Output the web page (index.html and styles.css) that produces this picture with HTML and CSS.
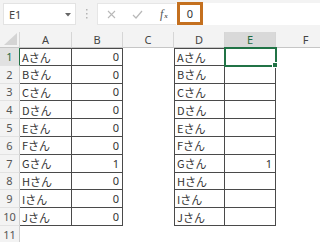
FILE: index.html
```html
<!DOCTYPE html>
<html lang="ja">
<head>
    <meta charset="UTF-8">
    <title>Sheet</title>
    <link rel="stylesheet" href="styles.css">
</head>
<body>
    <div class="bar">
        <div class="namebox">
            <span>E1</span>
            <svg class="drop" width="6" height="4" viewBox="0 0 6 4"><path d="M0 0h6L3 3.5z" fill="#666"/></svg>
        </div>
        <div class="grip">
            <svg width="2" height="10" viewBox="0 0 2 10"><rect x="0" y="0" width="1.5" height="1.5" fill="#b4b4b4"/><rect x="0" y="4" width="1.5" height="1.5" fill="#b4b4b4"/><rect x="0" y="8" width="1.5" height="1.5" fill="#b4b4b4"/></svg>
        </div>
        <div class="fbtns">
            <svg width="9" height="9" viewBox="0 0 9 9"><path d="M1 1l7 7M8 1L1 8" stroke="#b8b8b8" stroke-width="1.1" fill="none"/></svg>
            <svg width="11" height="9" viewBox="0 0 11 9"><path d="M1 5l3 3 6-7" stroke="#b8b8b8" stroke-width="1.2" fill="none"/></svg>
            <span class="fx">f<span class="sub">x</span></span>
        </div>
        <div class="formula">
            <span class="mark">0</span>
        </div>
    </div>

    <div class="sheet">
        <div class="corner"><svg width="13" height="12" viewBox="0 0 13 12"><path d="M13 0V12H0z" fill="#d4d4d4"/></svg></div>
        <div class="ch">A</div>
        <div class="ch">B</div>
        <div class="ch">C</div>
        <div class="ch">D</div>
        <div class="ch on">E</div>
        <div class="ch">F</div>

        <div class="rh on">1</div>
        <div class="c b t">Aさん</div>
        <div class="c b t n">0</div>
        <div class="c"></div>
        <div class="c b t l">Aさん</div>
        <div class="c b t sel"></div>
        <div class="c"></div>

        <div class="rh">2</div>
        <div class="c b">Bさん</div>
        <div class="c b n">0</div>
        <div class="c"></div>
        <div class="c b l">Bさん</div>
        <div class="c b"></div>
        <div class="c"></div>

        <div class="rh">3</div>
        <div class="c b">Cさん</div>
        <div class="c b n">0</div>
        <div class="c"></div>
        <div class="c b l">Cさん</div>
        <div class="c b"></div>
        <div class="c"></div>

        <div class="rh">4</div>
        <div class="c b">Dさん</div>
        <div class="c b n">0</div>
        <div class="c"></div>
        <div class="c b l">Dさん</div>
        <div class="c b"></div>
        <div class="c"></div>

        <div class="rh">5</div>
        <div class="c b">Eさん</div>
        <div class="c b n">0</div>
        <div class="c"></div>
        <div class="c b l">Eさん</div>
        <div class="c b"></div>
        <div class="c"></div>

        <div class="rh">6</div>
        <div class="c b">Fさん</div>
        <div class="c b n">0</div>
        <div class="c"></div>
        <div class="c b l">Fさん</div>
        <div class="c b"></div>
        <div class="c"></div>

        <div class="rh">7</div>
        <div class="c b">Gさん</div>
        <div class="c b n">1</div>
        <div class="c"></div>
        <div class="c b l">Gさん</div>
        <div class="c b n">1</div>
        <div class="c"></div>

        <div class="rh">8</div>
        <div class="c b">Hさん</div>
        <div class="c b n">0</div>
        <div class="c"></div>
        <div class="c b l">Hさん</div>
        <div class="c b"></div>
        <div class="c"></div>

        <div class="rh">9</div>
        <div class="c b">Iさん</div>
        <div class="c b n">0</div>
        <div class="c"></div>
        <div class="c b l">Iさん</div>
        <div class="c b"></div>
        <div class="c"></div>

        <div class="rh">10</div>
        <div class="c b">Jさん</div>
        <div class="c b n">0</div>
        <div class="c"></div>
        <div class="c b l">Jさん</div>
        <div class="c b"></div>
        <div class="c"></div>

        <div class="rh">11</div>
        <div class="c"></div>
        <div class="c"></div>
        <div class="c"></div>
        <div class="c"></div>
        <div class="c"></div>
        <div class="c"></div>
    </div>
</body>
</html>
```

FILE: styles.css
```css
body{
    margin: 0;
    width: 320px;
    height: 242px;
    overflow: hidden;
    background: #fff;
    font-family: "Noto Sans", "Noto Sans CJK JP", sans-serif;
    font-size: 11px;
    color: #333;
}

.bar{
    display: flex;
    height: 32px;
    padding-top: 3px;
    box-sizing: border-box;
    background: #f3f3f3;
}
.namebox{
    width: 73px;
    height: 22px;
    margin-left: 3px;
    box-sizing: border-box;
    border: 1px solid #e3e3e3;
    background: #fff;
    display: flex;
    align-items: center;
    justify-content: space-between;
    padding: 0 4px 0 5px;
    color: #444;
    font-size: 11px;
}
.drop{
    margin-top: 1px;
}
.grip{
    width: 21px;
    height: 22px;
    display: flex;
    align-items: center;
    justify-content: center;
}
.fbtns{
    width: 79px;
    height: 22px;
    box-sizing: border-box;
    border: 1px solid #e6e6e6;
    border-right: none;
    background: #fff;
    display: flex;
    align-items: center;
    gap: 16px;
    padding-left: 9px;
}
.fx{
    font-family: "Liberation Serif", serif;
    font-style: italic;
    font-size: 12px;
    color: #555;
    margin-left: 1px;
}
.fx .sub{
    font-size: 7px;
    font-weight: bold;
    margin-left: 1px;
}
.formula{
    flex: 1;
    height: 22px;
    background: #fff;
    display: flex;
}
.mark{
    width: 26px;
    height: 23px;
    margin: -1px 0 0 1px;
    box-sizing: border-box;
    border: 3px solid #c4701f;
    display: flex;
    align-items: center;
    justify-content: center;
    color: #333;
    font-size: 11px;
}

.sheet{
    display: grid;
    grid-template-columns: 20px 52px 51px 51px 51px 51px 60px;
    grid-template-rows: 16px repeat(11, 17.8px);
    font-family: "Noto Sans CJK JP", sans-serif;
}
.corner{
    background: #f3f3f3;
    border-right: 1px solid #d6d6d6;
    border-bottom: 1px solid #c6c6c6;
    box-sizing: border-box;
    display: flex;
    align-items: flex-end;
    justify-content: flex-end;
    padding: 0 2px 2px 0;
}
.ch{
    background: #f3f3f3;
    border-right: 1px solid #d6d6d6;
    border-bottom: 1px solid #c6c6c6;
    box-sizing: border-box;
    display: flex;
    align-items: center;
    justify-content: center;
    color: #444;
    font-family: "Noto Sans", sans-serif;
}
.ch.on{
    background: #d9d9d9;
    color: #1f6b43;
    border-bottom: 1px solid #217346;
}
.rh{
    background: #f3f3f3;
    border-right: 1px solid #cfcfcf;
    border-bottom: 1px solid #e2e2e2;
    box-sizing: border-box;
    display: flex;
    align-items: center;
    justify-content: center;
    color: #555;
    font-family: "Noto Sans", sans-serif;
}
.rh.on{
    background: #e1e1e1;
    color: #1f6b43;
    border-right: 1px solid #217346;
}
.c{
    box-sizing: border-box;
    display: flex;
    align-items: center;
    padding: 0 3px 0 2px;
    white-space: nowrap;
    color: #333;
}
.b{
    border-right: 1px solid #4a4a4a;
    border-bottom: 1px solid #4a4a4a;
}
.t{
    border-top: 1px solid #4a4a4a;
}
.l{
    border-left: 1px solid #4a4a4a;
}
.n{
    justify-content: flex-end;
    font-family: "Noto Sans", sans-serif;
}
.sel{
    position: relative;
    z-index: 1;
    outline: 2px solid #217346;
    outline-offset: -1px;
}
.sel::after{
    content: "";
    position: absolute;
    right: -3px;
    bottom: -3px;
    width: 4px;
    height: 4px;
    background: #217346;
    border: 1px solid #fff;
}
```
